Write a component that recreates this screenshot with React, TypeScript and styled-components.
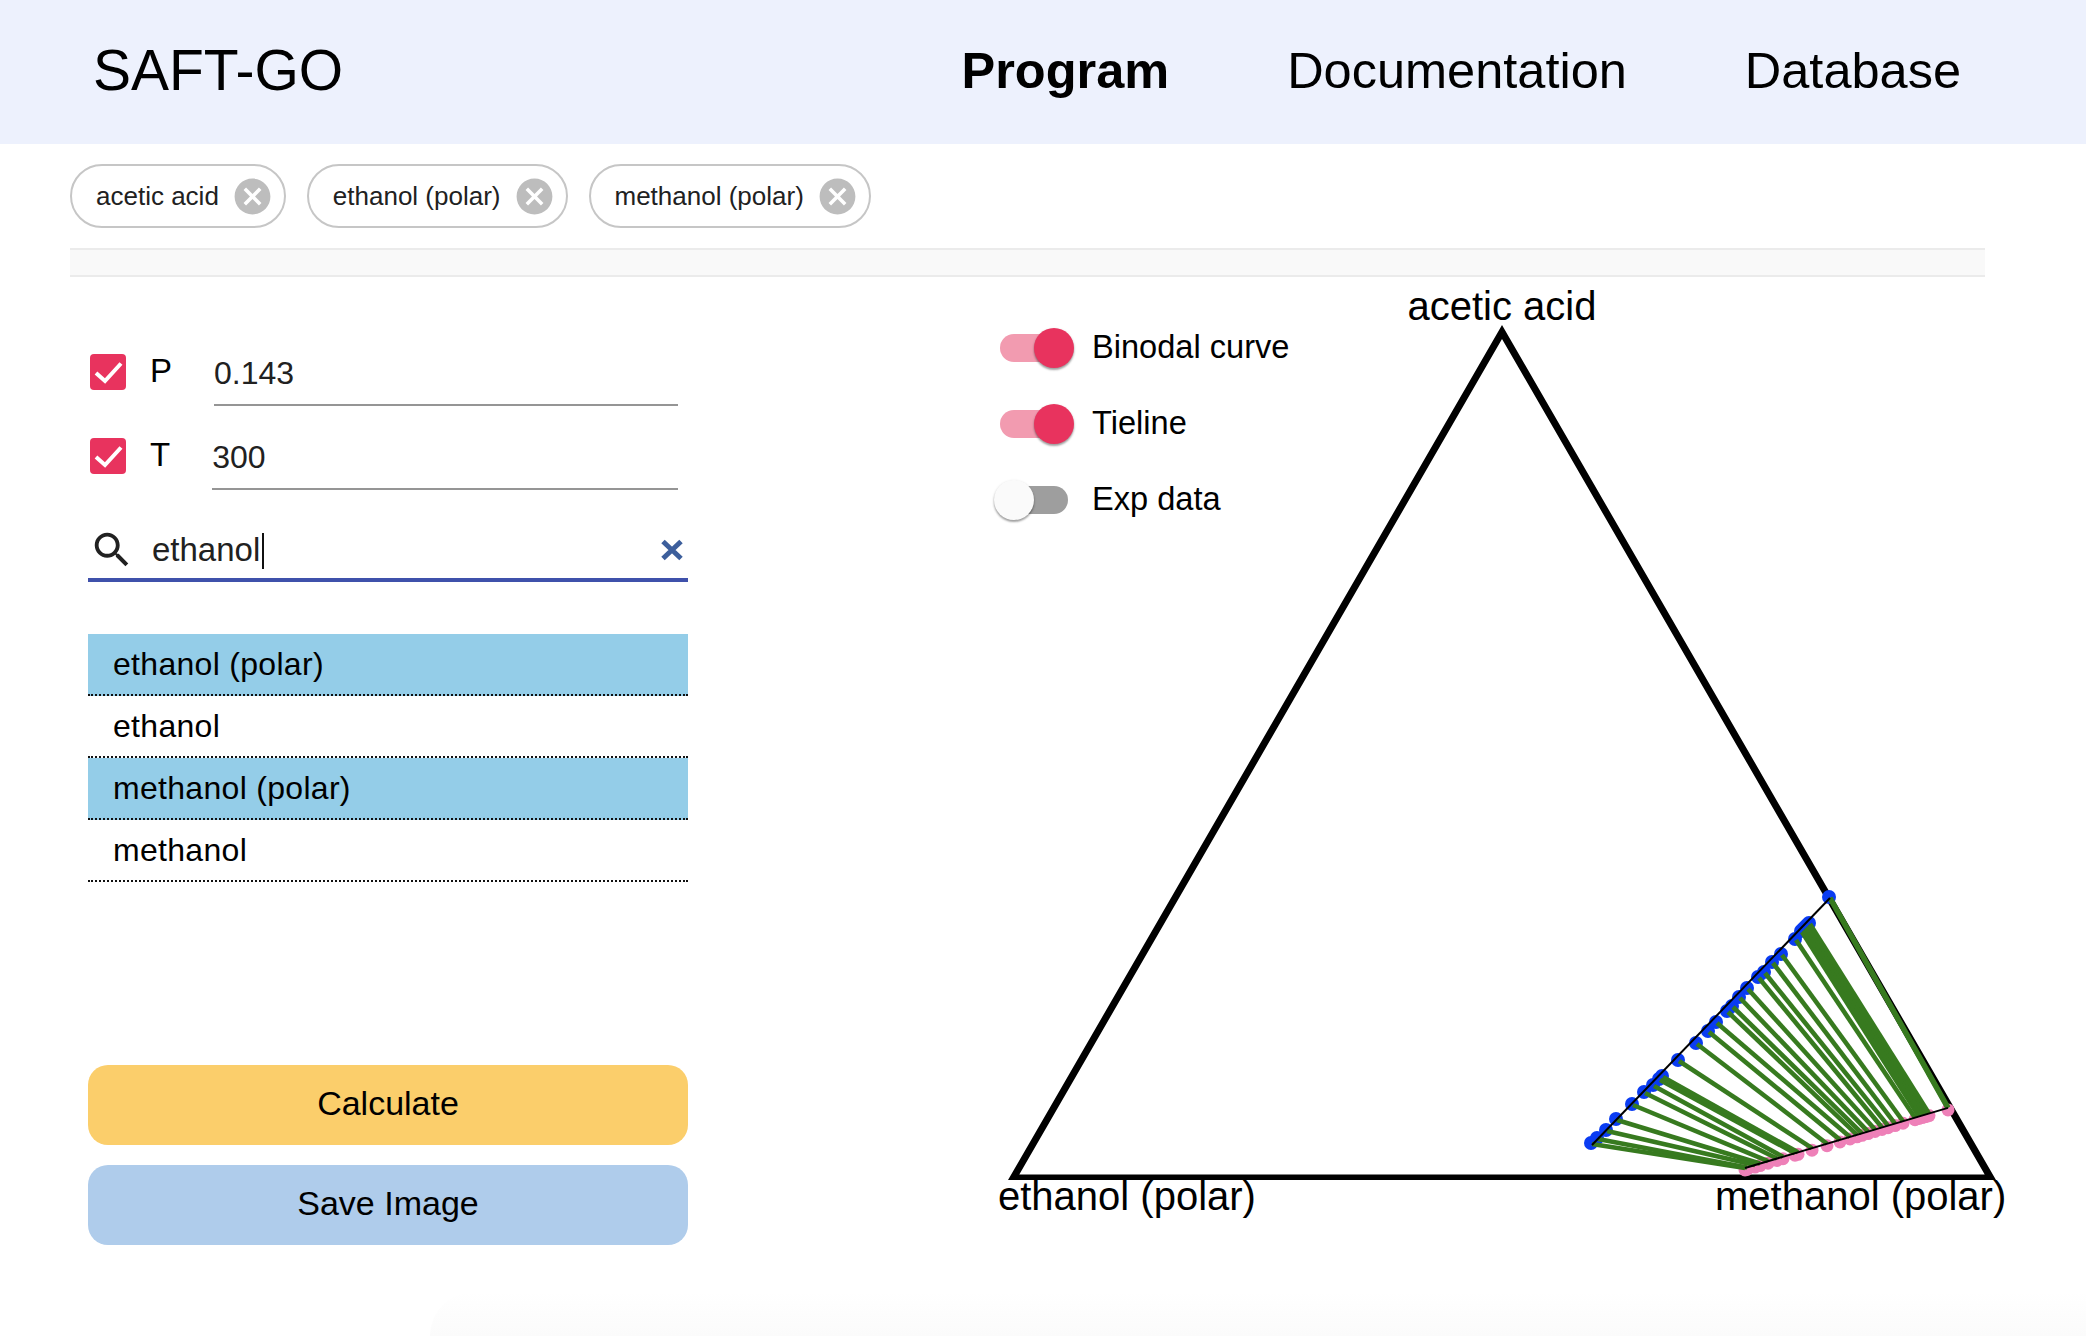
import styled, { createGlobalStyle } from 'styled-components';

const GlobalStyle = createGlobalStyle`
  html, body {
    margin: 0;
    padding: 0;
    background: #fff;
    font-family: "Liberation Sans", Arial, sans-serif;
    color: #000;
  }
  * {
    box-sizing: border-box;
  }
`;

const CHIPS = ['acetic acid', 'ethanol (polar)', 'methanol (polar)'];

const RESULTS = [
  { name: 'ethanol (polar)', selected: true },
  { name: 'ethanol', selected: false },
  { name: 'methanol (polar)', selected: true },
  { name: 'methanol', selected: false },
];

const TOGGLES = [
  { label: 'Binodal curve', on: true },
  { label: 'Tieline', on: true },
  { label: 'Exp data', on: false },
];

// tie lines: x,y of the blue end and x of the pink end, in page pixels
const TIES = [
  [1592, 1144, 1745], [1598, 1139, 1747], [1607, 1131, 1755], [1617, 1120, 1760],
  [1633, 1105, 1768], [1645, 1093, 1777], [1654, 1086, 1783], [1660, 1080, 1795],
  [1663, 1077, 1798], [1679, 1061, 1812], [1697, 1044, 1827], [1709, 1032, 1840],
  [1717, 1023, 1850], [1728, 1012, 1857], [1733, 1007, 1862], [1740, 998, 1868],
  [1748, 989, 1875], [1759, 978, 1882], [1765, 973, 1888], [1773, 963, 1895],
  [1782, 955, 1903], [1796, 940, 1915], [1802, 932, 1919], [1804, 930, 1922],
  [1806, 928, 1925], [1808, 926, 1927], [1810, 924, 1929], [1830, 898, 1948],
];

const pinkY = (x: number) => 1168 - (x - 1745) * 0.296;

function CheckMark() {
  return (
    <svg viewBox="0 0 36 36" width="36" height="36">
      <path d="M6 19l9 8L31 9.5" fill="none" stroke="#fff" strokeWidth="4" />
    </svg>
  );
}

function App() {
  return (
    <Page>
      <GlobalStyle />
      <BottomShade />
      <Header>
        <Brand>SAFT-GO</Brand>
        <Nav>
          <NavItem $active>Program</NavItem>
          <NavItem>Documentation</NavItem>
          <NavItem>Database</NavItem>
        </Nav>
      </Header>

      <ChipRow>
        {CHIPS.map((chip) => (
          <Chip key={chip}>
            <span>{chip}</span>
            <svg viewBox="0 0 24 24" width="43" height="43" fill="#bdbdbd">
              <path d="M12 2C6.47 2 2 6.47 2 12s4.47 10 10 10 10-4.47 10-10S17.53 2 12 2zm5 13.59L15.59 17 12 13.41 8.41 17 7 15.59 10.59 12 7 8.41 8.41 7 12 10.59 15.59 7 17 8.41 13.41 12 17 15.59z" />
            </svg>
          </Chip>
        ))}
      </ChipRow>
      <Band />

      <Main>
        <LeftPanel>
          <ParamRow>
            <Checkbox><CheckMark /></Checkbox>
            <ParamLabel>P</ParamLabel>
            <ParamField>0.143</ParamField>
          </ParamRow>
          <ParamRow>
            <Checkbox><CheckMark /></Checkbox>
            <ParamLabel>T</ParamLabel>
            <ParamField>300</ParamField>
          </ParamRow>

          <SearchBar>
            <svg viewBox="0 0 24 24" width="46" height="46" fill="#212121">
              <path d="M15.5 14h-.79l-.28-.27C15.41 12.59 16 11.11 16 9.5 16 5.91 13.09 3 9.5 3S3 5.91 3 9.5 5.91 16 9.5 16c1.61 0 3.09-.59 4.23-1.57l.27.28v.79l5 4.99L20.49 19l-4.99-5zm-6 0C7.01 14 5 11.99 5 9.5S7.01 5 9.5 5 14 7.01 14 9.5 11.99 14 9.5 14z" />
            </svg>
            <SearchText>ethanol</SearchText>
            <svg viewBox="0 0 24 22" width="24" height="22">
              <path d="M3 2.5l18 17M21 2.5l-18 17" stroke="#3d5f9c" strokeWidth="5" fill="none" />
            </svg>
          </SearchBar>

          <ResultList>
            {RESULTS.map((item) => (
              <ResultRow key={item.name} $selected={item.selected}>{item.name}</ResultRow>
            ))}
          </ResultList>

          <ActionButton $color="#fbce6b">Calculate</ActionButton>
          <ActionButton $color="#afcceb">Save Image</ActionButton>
        </LeftPanel>

        <ChartArea>
          <Legend>
            {TOGGLES.map((toggle) => (
              <LegendRow key={toggle.label}>
                <Track $on={toggle.on}><Thumb $on={toggle.on} /></Track>
                <LegendLabel>{toggle.label}</LegendLabel>
              </LegendRow>
            ))}
          </Legend>
          <svg viewBox="990 280 1040 960" width="1040" height="960">
            <path
              d="M1502 325L1996 1180H1008ZM1502 339L1019.3 1174.5H1984.7Z"
              fill="#000"
              fillRule="evenodd"
            />
            {TIES.map(([x, y]) => <circle key={`b${x}`} cx={x - 1} cy={y - 1} r="7" fill="#0a3cf2" />)}
            {TIES.map(([, , px]) => <circle key={`p${px}`} cx={px} cy={pinkY(px) + 2} r="6.5" fill="#ee80b8" />)}
            {TIES.map(([x, y, px]) => (
              <line key={`t${x}`} x1={x} y1={y} x2={px} y2={pinkY(px)} stroke="#377a1f" strokeWidth="4.6" />
            ))}
            <line x1="1830" y1="898" x2="1948" y2={pinkY(1948)} stroke="#377a1f" strokeWidth="5.5" />
            <line x1="1592" y1="1145" x2="1830" y2="898" stroke="#000" strokeWidth="2" />
            <line x1="1745" y1="1168" x2="1948" y2={pinkY(1948)} stroke="#000" strokeWidth="2" />
            <ChartLabel x="1502" y="320" textAnchor="middle">acetic acid</ChartLabel>
            <ChartLabel x="998" y="1210">ethanol (polar)</ChartLabel>
            <ChartLabel x="1715" y="1210">methanol (polar)</ChartLabel>
          </svg>
        </ChartArea>
      </Main>
    </Page>
  );
}

export default App;

const Page = styled.div`
  position: relative;
  width: 2086px;
  height: 1336px;
  overflow: hidden;
`;

const BottomShade = styled.div`
  position: absolute;
  left: 430px;
  right: 0;
  bottom: 0;
  height: 44px;
  border-top-left-radius: 44px;
  background: linear-gradient(to bottom, #fff, #fbfbfb);
`;

const Header = styled.header`
  height: 144px;
  padding: 0 125px 4px 93px;
  background-color: #edf1fd;
  display: flex;
  align-items: center;
  justify-content: space-between;
`;

const Brand = styled.div`
  font-size: 57px;
`;

const Nav = styled.nav`
  display: flex;
  gap: 118px;
`;

const NavItem = styled.div<{ $active?: boolean }>`
  font-size: 50.5px;
  font-weight: ${({ $active }) => ($active ? 700 : 400)};
`;

const ChipRow = styled.div`
  display: flex;
  gap: 21px;
  padding: 20px 70px;
`;

const Chip = styled.div`
  height: 64px;
  padding: 0 10px 0 24px;
  border: 2px solid #c6c6c6;
  border-radius: 32px;
  display: flex;
  align-items: center;
  gap: 12px;
  font-size: 26px;
  color: #212121;
`;

const Band = styled.div`
  height: 29px;
  margin: 0 101px 0 70px;
  background-color: #f9f9f9;
  border-top: 2px solid #ebebeb;
  border-bottom: 2px solid #ebebeb;
`;

const Main = styled.main`
  position: relative;
  display: flex;
  align-items: flex-start;
`;

const LeftPanel = styled.section`
  width: 600px;
  margin: 65px 0 0 88px;
  flex-shrink: 0;
`;

const ParamRow = styled.div`
  width: 590px;
  margin-bottom: 20px;
  display: flex;
  align-items: flex-start;
`;

const Checkbox = styled.div`
  width: 36px;
  height: 36px;
  margin: 12px 24px 0 2px;
  border-radius: 4px;
  background-color: #e8335e;
  flex-shrink: 0;
  svg {
    display: block;
  }
`;

const ParamLabel = styled.div`
  margin-top: 10px;
  font-size: 33px;
`;

const ParamField = styled.div`
  flex: 1;
  height: 64px;
  margin-left: 42px;
  border-bottom: 2px solid #959595;
  font-size: 32px;
  line-height: 62px;
  color: #212121;
`;

const SearchBar = styled.div`
  height: 58px;
  margin-top: 34px;
  padding: 0 4px 2px 1px;
  border-bottom: 4px solid #3f51ab;
  display: flex;
  align-items: center;
  svg {
    flex-shrink: 0;
  }
`;

const SearchText = styled.span`
  flex: 1;
  margin-left: 17px;
  font-size: 33px;
  color: #212121;
  &::after {
    content: '';
    display: inline-block;
    width: 2px;
    height: 36px;
    margin-left: 2px;
    vertical-align: -8px;
    background-color: #111;
  }
`;

const ResultList = styled.ul`
  list-style: none;
  margin: 52px 0 183px;
  padding: 0;
`;

const ResultRow = styled.li<{ $selected: boolean }>`
  height: 62px;
  padding-left: 25px;
  border-bottom: 2px dotted #111;
  background-color: ${({ $selected }) => ($selected ? '#94cde8' : '#fff')};
  font-size: 32px;
  letter-spacing: 0.3px;
  line-height: 60px;
`;

const ActionButton = styled.button<{ $color: string }>`
  display: block;
  width: 100%;
  height: 80px;
  margin-bottom: 20px;
  padding: 0 0 3px;
  border: none;
  border-radius: 20px;
  background-color: ${({ $color }) => $color};
  font-family: inherit;
  font-size: 34px;
  color: #000;
`;

const ChartArea = styled.section`
  position: relative;
  margin: 3px 0 0 302px;
  svg {
    display: block;
  }
`;

const Legend = styled.div`
  position: absolute;
  top: 48px;
  left: 10px;
  display: flex;
  flex-direction: column;
  gap: 36px;
`;

const LegendRow = styled.div`
  height: 40px;
  display: flex;
  align-items: center;
  gap: 24px;
`;

const LegendLabel = styled.span`
  padding-bottom: 2px;
  font-size: 32.6px;
`;

const Track = styled.div<{ $on: boolean }>`
  position: relative;
  width: 68px;
  height: 28px;
  border-radius: 14px;
  background-color: ${({ $on }) => ($on ? '#f29bb0' : '#9e9e9e')};
`;

const Thumb = styled.div<{ $on: boolean }>`
  position: absolute;
  top: -6px;
  left: ${({ $on }) => ($on ? '34px' : '-6px')};
  width: 40px;
  height: 40px;
  border-radius: 50%;
  background-color: ${({ $on }) => ($on ? '#e8335e' : '#fafafa')};
  box-shadow: 0 2px 2px rgba(0, 0, 0, 0.3), 0 1px 3px rgba(0, 0, 0, 0.15);
`;

const ChartLabel = styled.text`
  font-family: "Liberation Sans", Arial, sans-serif;
  font-size: 40px;
  fill: #000;
`;
